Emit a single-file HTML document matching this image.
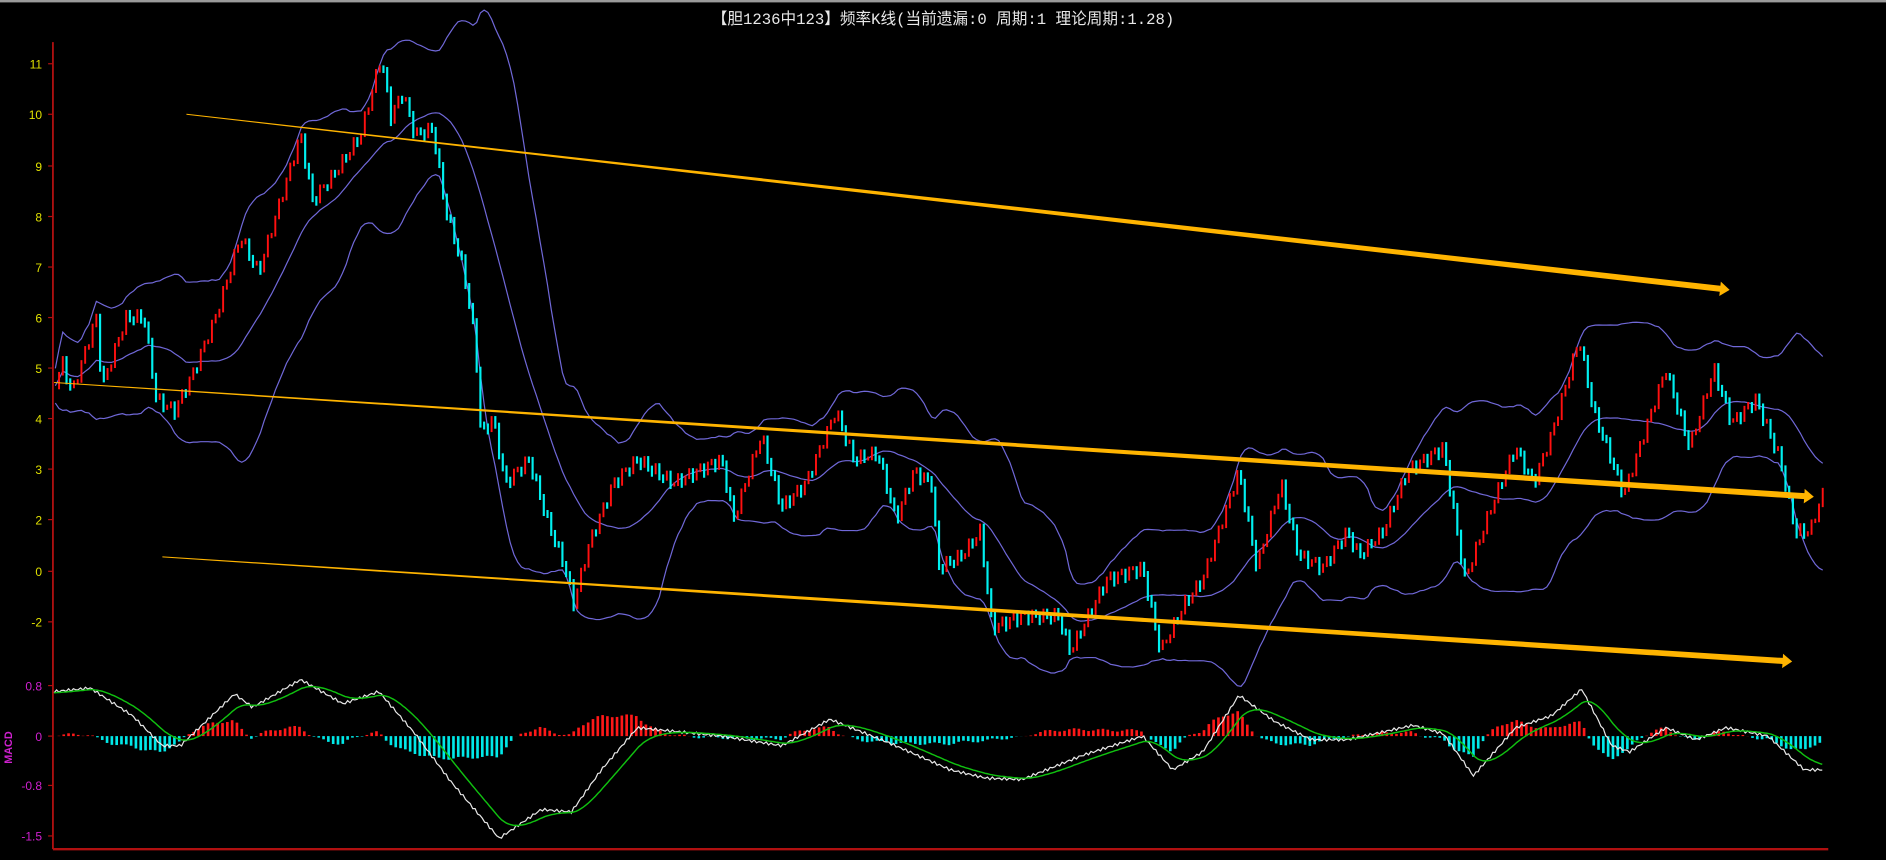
<!DOCTYPE html>
<html><head><meta charset="utf-8"><style>
html,body{margin:0;padding:0;background:#000;width:1886px;height:860px;overflow:hidden}
svg{display:block}
text{font-family:"Liberation Sans","Noto Sans CJK SC",sans-serif}
</style></head><body>
<svg id="s" width="1886" height="860" viewBox="0 0 1568 715" preserveAspectRatio="none" xmlns="http://www.w3.org/2000/svg">
<rect width="1568" height="715" fill="#000"/>
<rect width="1568" height="2" fill="#9a9a9a"/>
<text x="784" y="20" fill="#e8e8e8" font-size="13" text-anchor="middle" style="font-family:'Liberation Mono','Noto Sans CJK SC',monospace">【胆1236中123】频率K线(当前遗漏:0 周期:1 理论周期:1.28)</text>
<g id="g"></g>
</svg>
<script>
var NS="http://www.w3.org/2000/svg",g=document.getElementById("g");
function el(n,a){var e=document.createElementNS(NS,n);for(var k in a)e.setAttribute(k,a[k]);g.appendChild(e);return e;}
function interp(pts,x){for(var i=1;i<pts.length;i++){if(x<=pts[i][0]){var a=pts[i-1],b=pts[i];return a[1]+(b[1]-a[1])*(x-a[0])/(b[0]-a[0]);}}return pts[pts.length-1][1];}
el("line",{x1:44,y1:35,x2:44,y2:706,stroke:"#b01010","stroke-width":1.5});
el("line",{x1:44,y1:706,x2:1520,y2:706,stroke:"#b01010","stroke-width":2});
var labs=[["11",53],["10",95],["9",138],["8",180],["7",222],["6",264],["5",306],["4",348],["3",390],["2",432],["0",475],["-2",517]];
labs.forEach(function(l){var t=el("text",{x:35,y:l[1]+4,fill:"#e0e000","font-size":10,"text-anchor":"end"});t.textContent=l[0];el("line",{x1:40,y1:l[1],x2:44,y2:l[1],stroke:"#b01010"});});
[["0.8",570],["0",612],["-0.8",653],["-1.5",695]].forEach(function(l){var t=el("text",{x:35,y:l[1]+4,fill:"#d020d0","font-size":10,"text-anchor":"end"});t.textContent=l[0];el("line",{x1:40,y1:l[1],x2:44,y2:l[1],stroke:"#b01010"});});
var m=el("text",{x:0,y:0,fill:"#d020d0","font-size":9,"font-weight":"bold",transform:"translate(10,635) rotate(-90)"});m.textContent="MACD";
var P=[[45,320],[52,300],[60,325],[80,262],[85,320],[105,262],[120,262],[130,330],[145,340],[160,310],[180,260],[200,195],[215,225],[250,110],[260,165],[280,140],[300,110],[317,45],[325,95],[335,75],[345,110],[360,105],[370,170],[385,220],[395,280],[400,360],[410,345],[420,400],[440,380],[455,430],[470,470],[477,500],[490,450],[510,400],[530,380],[560,400],[600,380],[610,430],[633,360],[650,420],[670,400],[695,340],[710,380],[730,375],[745,430],[760,390],[775,400],[780,470],[800,460],[815,440],[825,520],[850,510],[880,510],[890,540],[920,480],[950,470],[965,540],[985,500],[1000,480],[1030,390],[1045,470],[1065,400],[1080,460],[1100,470],[1120,440],[1130,460],[1150,440],[1170,390],[1200,370],[1218,480],[1240,420],[1260,370],[1275,400],[1290,360],[1313,280],[1325,340],[1340,380],[1350,410],[1370,350],[1385,305],[1405,370],[1425,305],[1440,350],[1460,330],[1480,380],[1493,440],[1505,440],[1515,410]];
var xs=[],ys=[];for(var x=46;x<=1516;x+=3.1){xs.push(x);var j=Math.sin(x*0.7)*5;ys.push(interp(P,x)+j);}
var W=24,up=[],md=[],lo=[];
for(var i=0;i<xs.length;i++){var s=0,n=0;for(var k=Math.max(0,i-W+1);k<=i;k++){s+=ys[k];n++;}var mu=s/n,v=0;for(k=Math.max(0,i-W+1);k<=i;k++)v+=(ys[k]-mu)*(ys[k]-mu);var sd=Math.sqrt(v/n)+8;md.push([xs[i],mu]);up.push([xs[i],mu-1.8*sd]);lo.push([xs[i],mu+1.8*sd]);}
function pl(a,c,w){el("polyline",{points:a.map(function(p){return p[0].toFixed(1)+","+p[1].toFixed(1)}).join(" "),fill:"none",stroke:c,"stroke-width":w});}
pl(up,"#7068d8",1);pl(md,"#7068d8",1);pl(lo,"#7068d8",1);
for(i=1;i<xs.length;i++){var a=ys[i-1],b=ys[i];if(b<a){el("line",{x1:xs[i],y1:b,x2:xs[i],y2:a+3,stroke:"#ff1010","stroke-width":1.6});}else{el("line",{x1:xs[i],y1:a,x2:xs[i],y2:b+5,stroke:"#00f0f0","stroke-width":1.8});}}
var D=[[45,575],[75,572],[110,595],[135,620],[150,620],[195,577],[210,588],[250,565],[285,585],[315,575],[345,610],[375,650],[415,697],[450,673],[475,675],[500,640],[530,605],[600,612],[650,620],[690,598],[740,618],[790,640],[820,647],[850,648],[900,628],[950,612],[975,640],[1000,625],[1030,578],[1060,600],[1090,615],[1120,615],[1175,603],[1200,610],[1225,645],[1260,605],[1290,595],[1315,573],[1340,620],[1355,625],[1385,605],[1410,615],[1435,605],[1470,612],[1500,640],[1515,640]];
var dif=[],dea=[],e=null;
for(x=45;x<=1516;x+=2){var y=interp(D,x)+Math.sin(x*1.3)*1.2;dif.push([x,y]);e=e===null?y:e+(y-e)*0.12;dea.push([x,e]);}
for(i=0;i<dif.length;i+=2){var h=(dif[i][1]-dea[i][1])*1.0;var c=h<0?"#ff1818":"#00e8e8";el("line",{x1:dif[i][0],y1:612,x2:dif[i][0],y2:612+h,stroke:c,"stroke-width":2.2});}
pl(dif,"#e8e8e8",1);pl(dea,"#10c010",1.2);
function arrow(x1,y1,x2,y2){var dx=x2-x1,dy=y2-y1,L=Math.hypot(dx,dy),ux=dx/L,uy=dy/L,nx=-uy,ny=ux;var bx=x2-ux*8,by=y2-uy*8;
el("polygon",{points:[x1+nx*0.4,y1+ny*0.4,bx+nx*2.5,by+ny*2.5,bx+nx*6,by+ny*6,x2,y2,bx-nx*6,by-ny*6,bx-nx*2.5,by-ny*2.5,x1-nx*0.4,y1-ny*0.4].map(function(v){return v.toFixed(1)}).join(" "),fill:"#ffb400"});}
arrow(155,95,1438,241);arrow(45,318,1508,413);arrow(135,463,1490,550);
</script>
</body></html>
